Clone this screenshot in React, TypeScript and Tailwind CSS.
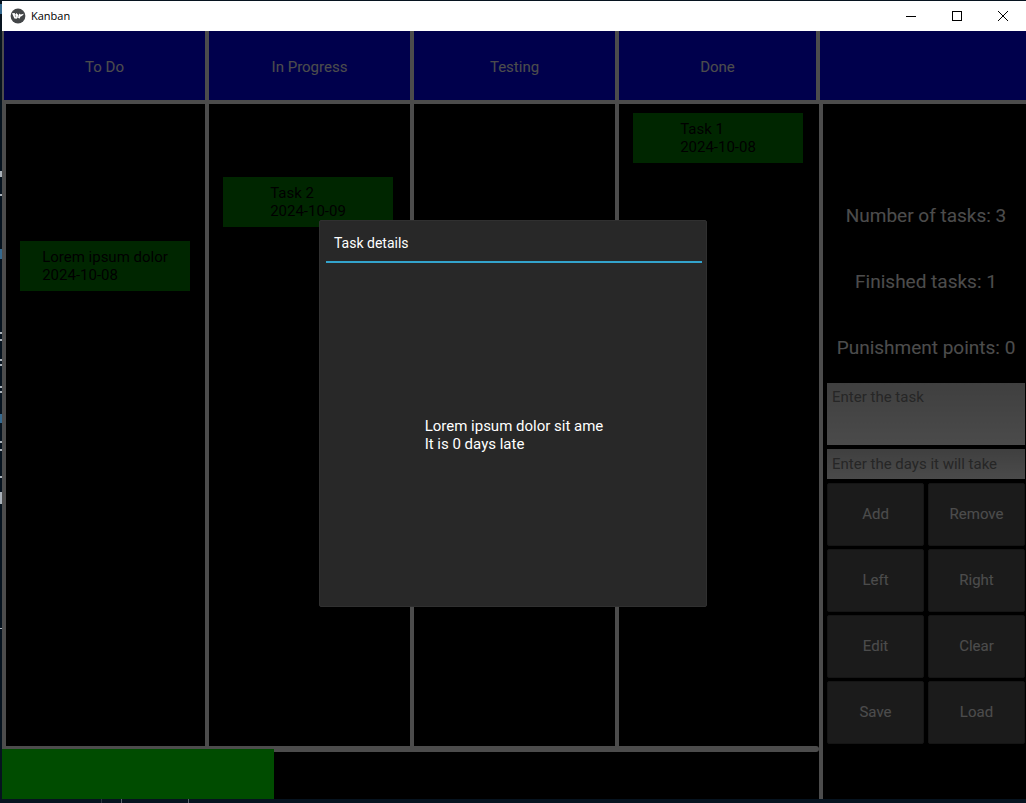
import React from "react";

type Task = { title: string; date: string; slot: number };
type Column = { name: string; tasks: Task[] };

const columns: Column[] = [
  { name: "To Do", tasks: [{ title: "Lorem ipsum dolor", date: "2024-10-08", slot: 3 }] },
  { name: "In Progress", tasks: [{ title: "Task 2", date: "2024-10-09", slot: 2 }] },
  { name: "Testing", tasks: [] },
  { name: "Done", tasks: [{ title: "Task 1", date: "2024-10-08", slot: 1 }] },
];

const stats = ["Number of tasks: 3", "Finished tasks: 1", "Punishment points: 0"];
const actions = ["Add", "Remove", "Left", "Right", "Edit", "Clear", "Save", "Load"];

function TitleBar() {
  return (
    <header className="flex h-[30px] shrink-0 items-center bg-white text-black">
      <svg className="ml-2 size-4" viewBox="0 0 16 16" aria-hidden="true">
        <circle cx="8" cy="8" r="7.4" fill="#434648" />
        <path
          d="M2 5.2 4.6 5 5.4 6.6 6.4 5 8.6 7.2 9.4 5.4 10.6 6.4 14 5.8 12 8 10.6 8.6 9.4 10.8 7.8 9.4 6.6 10.8 4.4 10.4Z"
          fill="#fff"
        />
        <path d="M5.2 6.6 5.8 9.2M8.6 7.2 7.8 9.4" stroke="#434648" strokeWidth="0.5" fill="none" />
      </svg>
      <h1 className="ml-[5px] font-['Open_Sans',sans-serif] text-[11px]">Kanban</h1>
      <div className="ml-auto flex h-full">
        <button type="button" aria-label="Minimize" className="flex w-[46px] items-center justify-center">
          <svg width="10" height="10" viewBox="0 0 10 10" shapeRendering="crispEdges">
            <path d="M0 5.5H10" stroke="#000" />
          </svg>
        </button>
        <button type="button" aria-label="Maximize" className="flex w-[46px] items-center justify-center">
          <svg width="10" height="10" viewBox="0 0 10 10" shapeRendering="crispEdges">
            <path d="M.5 .5H9.5V9.5H.5Z" stroke="#000" fill="none" />
          </svg>
        </button>
        <button type="button" aria-label="Close" className="flex w-[46px] items-center justify-center">
          <svg width="10" height="10" viewBox="0 0 10 10">
            <path d="M0 0 10 10M10 0 0 10" stroke="#000" />
          </svg>
        </button>
      </div>
    </header>
  );
}

function Board() {
  return (
    <main className="flex min-w-0 flex-1 flex-col">
      <div className="grid flex-1 grid-cols-[199fr_201fr_201fr_200fr] gap-1 bg-white pl-1">
        {columns.map((column) => (
          <section
            key={column.name}
            aria-label={column.name}
            className="grid auto-rows-[50px] grid-cols-1 content-start gap-y-3.5 bg-black px-3.5 pt-[9px]"
          >
            {column.tasks.map((task) => (
              <button
                key={task.title}
                type="button"
                style={{ gridRow: task.slot }}
                className="flex w-[170px] items-center justify-center bg-[#008000] text-left text-[15px] leading-[18px] text-black"
              >
                <span>
                  {task.title}
                  <br />
                  {task.date}
                </span>
              </button>
            ))}
          </section>
        ))}
      </div>
      <div
        role="progressbar"
        aria-label="Finished tasks"
        aria-valuenow={33}
        aria-valuemin={0}
        aria-valuemax={100}
        className="relative h-[53px]"
      >
        <div className="h-1.5 rounded-r-sm bg-white" />
        <div className="absolute bottom-0 left-0 h-[50px] w-1/3 bg-[#00ff00]" />
      </div>
    </main>
  );
}

function Sidebar() {
  return (
    <aside className="flex w-[207px] shrink-0 flex-col border-l-4 border-white pt-[79px] pr-px pl-1">
      {stats.map((stat) => (
        <p key={stat} className="flex h-[66px] items-center justify-center text-[19px] whitespace-nowrap">
          {stat}
        </p>
      ))}
      <textarea
        aria-label="Task"
        placeholder="Enter the task"
        className="mt-0.5 block h-[62px] w-full resize-none bg-linear-to-b from-[#d4d4d4] to-[#fafafa] px-[5px] pt-[5px] text-[15px] leading-[18px] text-black placeholder:text-[#808080]"
      />
      <input
        type="text"
        aria-label="Days"
        placeholder="Enter the days it will take"
        className="mt-1 block h-[30px] w-full bg-linear-to-b from-[#d4d4d4] to-[#fafafa] px-[5px] text-[15px] leading-[18px] text-black placeholder:text-[#808080]"
      />
      <div className="mt-1 grid auto-rows-[63px] grid-cols-2 gap-x-1 gap-y-[3px]">
        {actions.map((action) => (
          <button key={action} type="button" className="rounded-[2px] border border-[#484848] bg-[#5a5a5a] text-[15px]">
            {action}
          </button>
        ))}
      </div>
    </aside>
  );
}

function TaskDialog() {
  return (
    <div className="absolute inset-0 flex items-center justify-center bg-black/70 pr-0.5 pb-[3px]">
      <div
        role="dialog"
        aria-labelledby="dialog-title"
        className="flex h-[387px] w-[388px] flex-col rounded-[2px] border border-[#303030] bg-[#282828] pr-1 pl-1.5 text-white"
      >
        <h2
          id="dialog-title"
          className="flex h-[42px] items-center border-b-2 border-[#33a3cc] px-2 pt-1 text-[14px] font-normal"
        >
          Task details
        </h2>
        <div className="flex flex-1 items-center justify-center text-[15px] leading-[18px]">
          <p>
            Lorem ipsum dolor sit ame
            <br />
            It is 0 days late
          </p>
        </div>
      </div>
    </div>
  );
}

export default function App() {
  return (
    <div className="relative flex min-h-screen flex-col bg-[#06131f] pt-px pb-1 pl-0.5 font-[Roboto,sans-serif]">
      <svg className="absolute top-0 left-0 h-[803px] w-0.5" viewBox="0 0 2 803" aria-hidden="true">
        <path
          d="M1 171v6M1 194v2M1 332v2M1 339v2M1 359v2M1 364v2M1 386v2M1 391v2M1 441v2M1 449v2M1 476v2M1 492v12M1 628v1"
          stroke="#aab2ba"
          strokeWidth="2"
        />
        <path d="M1 4v10M1 249v10M1 414v9" stroke="#35698f" strokeWidth="2" />
      </svg>
      <svg className="absolute bottom-0 left-0 h-1 w-[200px]" viewBox="0 0 200 4" aria-hidden="true">
        <path d="M121.5 0v4M188.5 0v4" stroke="#5c666f" />
        <path d="M101.5 0v4" stroke="#2a3640" />
      </svg>
      <TitleBar />
      <div className="relative flex flex-1 flex-col bg-black text-white">
        <div className="grid h-[73px] shrink-0 grid-cols-[201fr_201fr_201fr_197fr_206fr] gap-1 border-b-4 border-l-2 border-white bg-white">
          {columns.map((column) => (
            <h2 key={column.name} className="flex items-center justify-center bg-[#0000ff] pt-1 text-[15px]">
              {column.name}
            </h2>
          ))}
          <div className="bg-[#0000ff]" />
        </div>
        <div className="flex flex-1">
          <Board />
          <Sidebar />
        </div>
        <TaskDialog />
      </div>
    </div>
  );
}
